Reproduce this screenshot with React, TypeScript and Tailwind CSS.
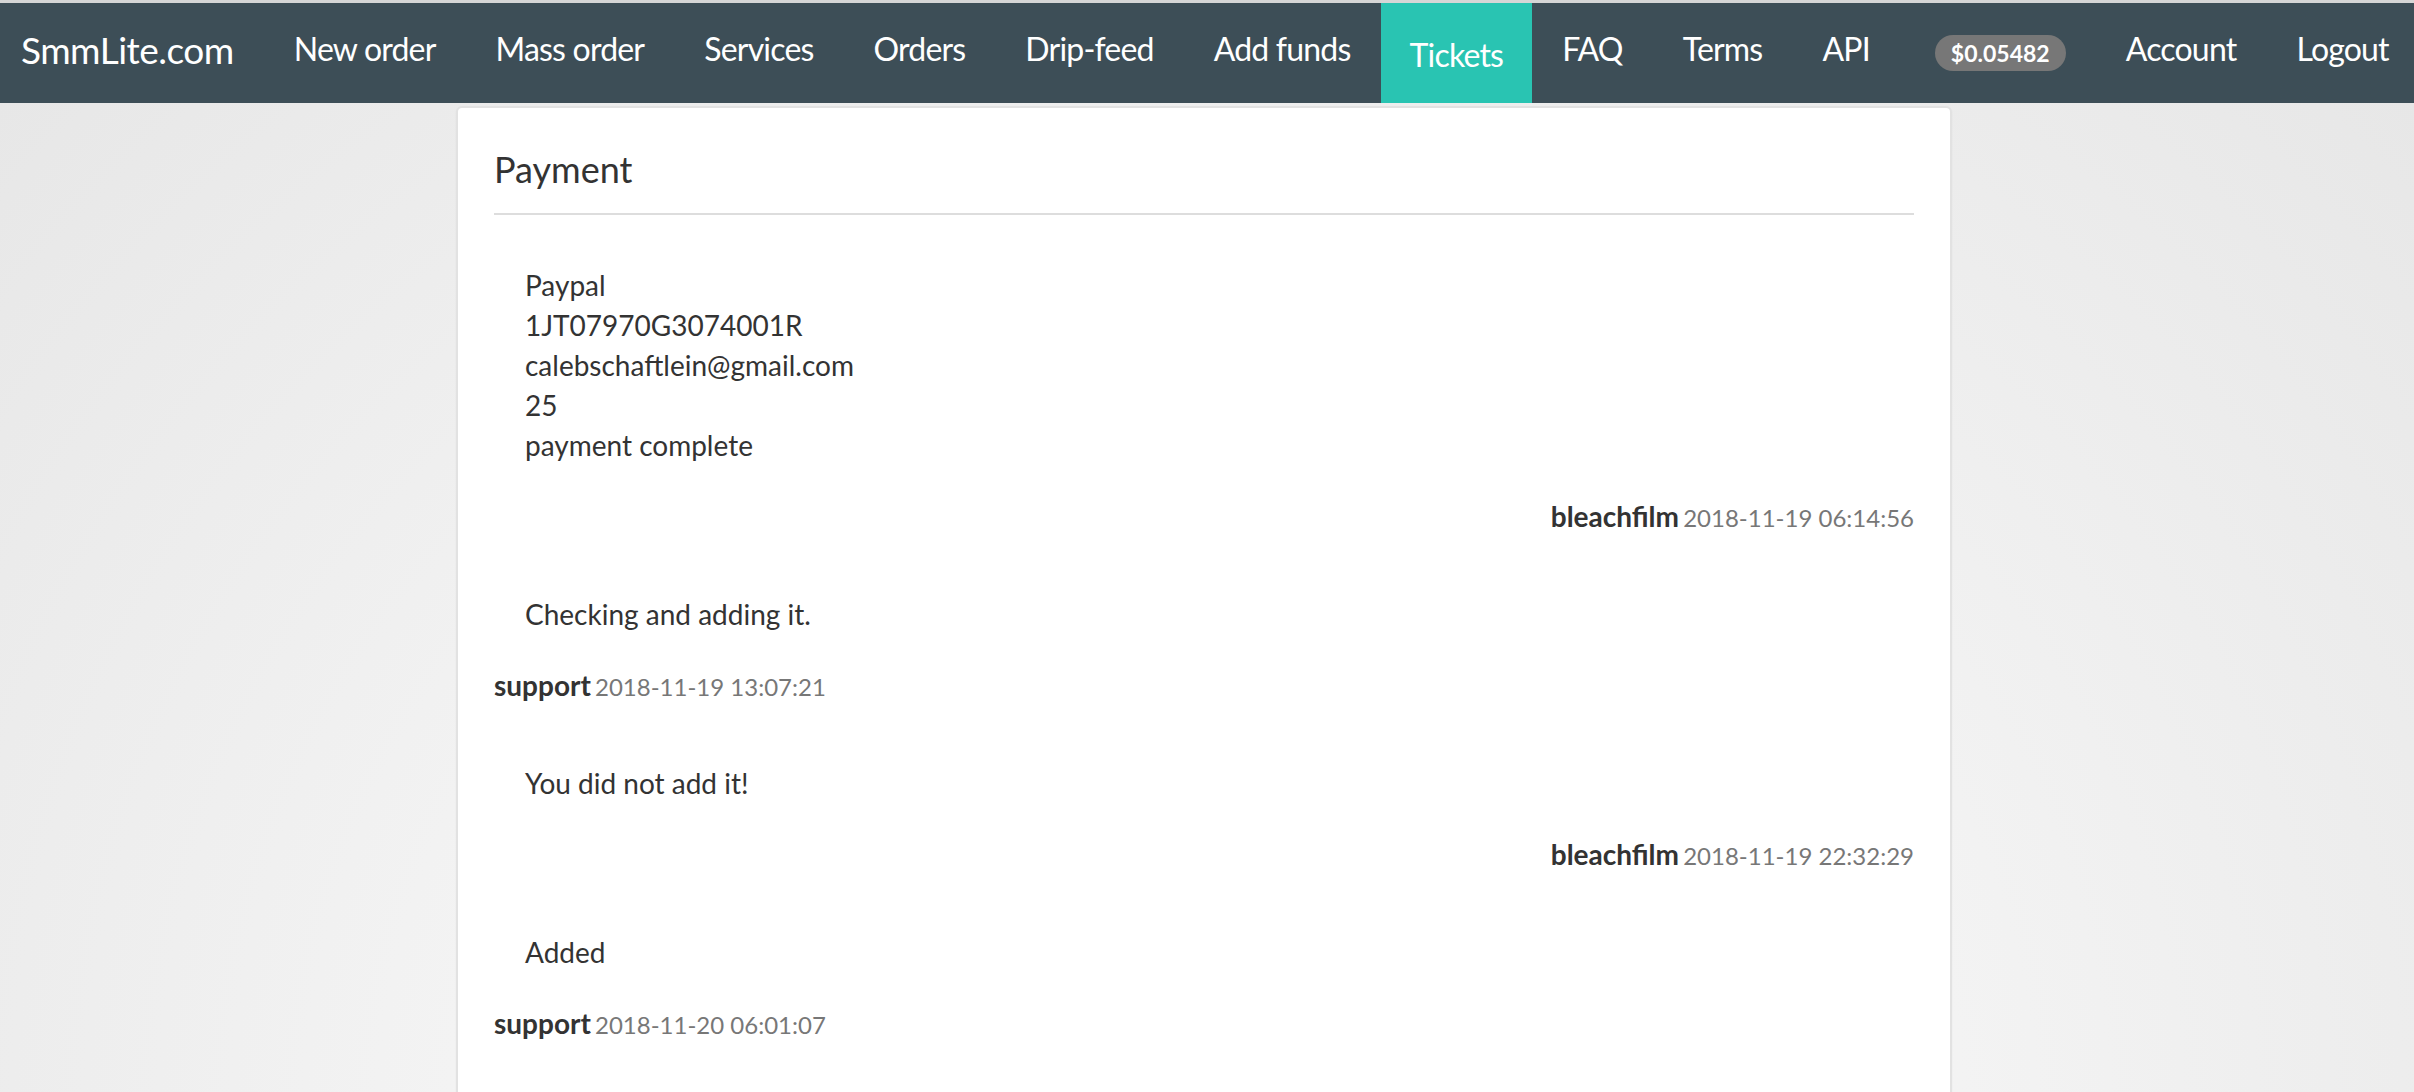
import React from "react";

type Message = {
  lines: string[];
  author: string;
  date: string;
  mine: boolean;
};

const NAV_ITEMS = [
  "New order",
  "Mass order",
  "Services",
  "Orders",
  "Drip-feed",
  "Add funds",
  "Tickets",
  "FAQ",
  "Terms",
  "API",
];

const MESSAGES: Message[] = [
  {
    lines: ["Paypal", "1JT07970G3074001R", "calebschaftlein@gmail.com", "25", "payment complete"],
    author: "bleachfilm",
    date: "2018-11-19 06:14:56",
    mine: true,
  },
  {
    lines: ["Checking and adding it."],
    author: "support",
    date: "2018-11-19 13:07:21",
    mine: false,
  },
  {
    lines: ["You did not add it!"],
    author: "bleachfilm",
    date: "2018-11-19 22:32:29",
    mine: true,
  },
  {
    lines: ["Added"],
    author: "support",
    date: "2018-11-20 06:01:07",
    mine: false,
  },
];

function NavBar() {
  return (
    <nav className="flex h-[103px] items-stretch whitespace-nowrap border-t-[3px] border-[#d6d6d6] bg-[#3d4e57] text-white">
      <a className="flex shrink-0 items-center pb-[7px] pl-[21px] pr-[30px] text-[37px] tracking-[-0.5px]">
        SmmLite.com
      </a>
      <ul className="flex shrink-0 items-stretch">
        {NAV_ITEMS.map((item) =>
          item === "Tickets" ? (
            <li key={item} className="flex items-center bg-[#29c4b2] px-[29px] pt-[3px] text-[32px] tracking-[-0.8px]">
              {item}
            </li>
          ) : (
            <li key={item} className="flex items-center px-[30px] pb-[8px] text-[32px] tracking-[-0.8px]">
              {item}
            </li>
          )
        )}
      </ul>
      <div className="flex shrink-0 items-center pl-[35px] pr-[30px]">
        <span className="rounded-full bg-[#777777] px-[16px] py-[3px] text-[23px] font-bold leading-[30px]">
          $0.05482
        </span>
      </div>
      <div className="flex shrink-0 items-stretch">
        <span className="flex items-center px-[30px] pb-[8px] text-[32px] tracking-[-0.8px]">Account</span>
        <span className="flex items-center px-[30px] pb-[8px] text-[32px] tracking-[-0.8px]">Logout</span>
      </div>
    </nav>
  );
}

function MessageRow({ msg }: { msg: Message }) {
  return (
    <div className="flex flex-col">
      <div className="pl-[31px] text-[28px] leading-[40px] text-[#333333]">
        {msg.lines.map((line) => (
          <div key={line}>{line}</div>
        ))}
      </div>
      <div className={`mt-[31px] leading-[40px] ${msg.mine ? "text-right" : "text-left"}`}>
        <span className="text-[28px] font-bold text-[#333333]">{msg.author}</span>{" "}
        <span className="text-[24px] text-[#777777]">{msg.date}</span>
      </div>
    </div>
  );
}

export default function App() {
  return (
    <div
      className="min-h-screen overflow-hidden bg-[radial-gradient(ellipse_at_50%_100%,#ffffff_0%,#f4f4f4_40%,#e6e6e6_100%)]"
      style={{ fontFamily: "Lato, 'Open Sans', sans-serif" }}
    >
      <NavBar />
      <main className="ml-[456px] mt-[3px] w-[1496px] rounded-[6px] border-[2px] border-[#e2e2e2] bg-white px-[36px] pb-[80px] pt-[41px] shadow-[0_1px_2px_rgba(0,0,0,0.05)]">
        <h3 className="text-[36px] leading-[40px] text-[#333333]">Payment</h3>
        <div className="mt-[24px] h-[2px] bg-[#dddddd]" />
        <div className="mt-[50px] flex flex-col gap-[53px]">
          {MESSAGES.map((msg) => (
            <MessageRow key={msg.date} msg={msg} />
          ))}
        </div>
      </main>
    </div>
  );
}
